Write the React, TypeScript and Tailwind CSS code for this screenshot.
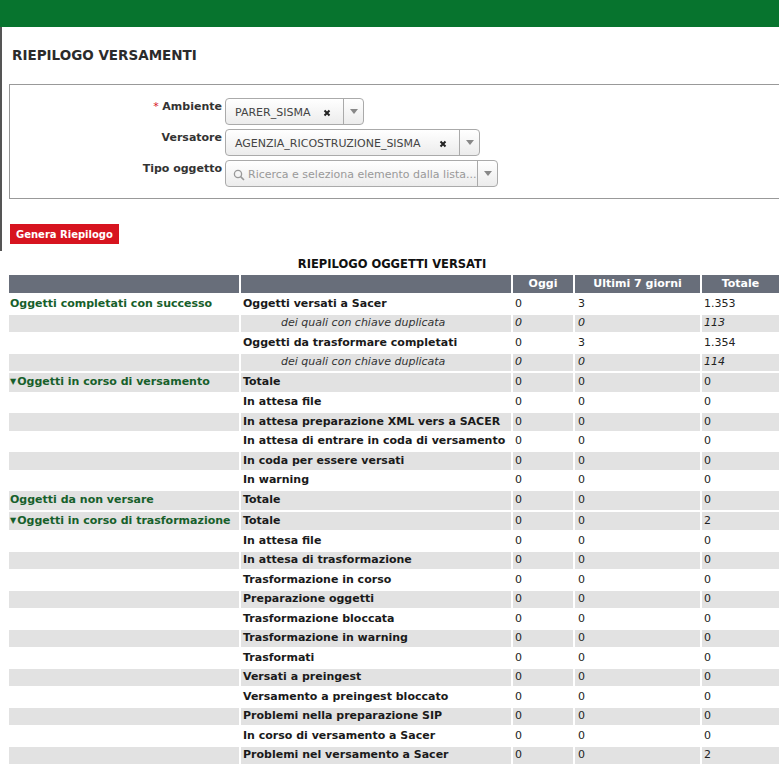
import React from 'react';

type Row = {
  group?: string;
  caret?: boolean;
  label: string;
  sub?: boolean;
  oggi: string;
  sette: string;
  totale: string;
  gray?: boolean;
  tall?: boolean;
};

const rows: Row[] = [
  { group: 'Oggetti completati con successo', label: 'Oggetti versati a Sacer', oggi: '0', sette: '3', totale: '1.353' },
  { label: 'dei quali con chiave duplicata', sub: true, oggi: '0', sette: '0', totale: '113', gray: true },
  { label: 'Oggetti da trasformare completati', oggi: '0', sette: '3', totale: '1.354' },
  { label: 'dei quali con chiave duplicata', sub: true, oggi: '0', sette: '0', totale: '114', gray: true },
  { group: 'Oggetti in corso di versamento', caret: true, label: 'Totale', oggi: '0', sette: '0', totale: '0', gray: true, tall: true },
  { label: 'In attesa file', oggi: '0', sette: '0', totale: '0' },
  { label: 'In attesa preparazione XML vers a SACER', oggi: '0', sette: '0', totale: '0', gray: true },
  { label: 'In attesa di entrare in coda di versamento', oggi: '0', sette: '0', totale: '0' },
  { label: 'In coda per essere versati', oggi: '0', sette: '0', totale: '0', gray: true },
  { label: 'In warning', oggi: '0', sette: '0', totale: '0' },
  { group: 'Oggetti da non versare', label: 'Totale', oggi: '0', sette: '0', totale: '0', gray: true, tall: true },
  { group: 'Oggetti in corso di trasformazione', caret: true, label: 'Totale', oggi: '0', sette: '0', totale: '2', gray: true, tall: true },
  { label: 'In attesa file', oggi: '0', sette: '0', totale: '0' },
  { label: 'In attesa di trasformazione', oggi: '0', sette: '0', totale: '0', gray: true },
  { label: 'Trasformazione in corso', oggi: '0', sette: '0', totale: '0' },
  { label: 'Preparazione oggetti', oggi: '0', sette: '0', totale: '0', gray: true },
  { label: 'Trasformazione bloccata', oggi: '0', sette: '0', totale: '0' },
  { label: 'Trasformazione in warning', oggi: '0', sette: '0', totale: '0', gray: true },
  { label: 'Trasformati', oggi: '0', sette: '0', totale: '0' },
  { label: 'Versati a preingest', oggi: '0', sette: '0', totale: '0', gray: true },
  { label: 'Versamento a preingest bloccato', oggi: '0', sette: '0', totale: '0' },
  { label: 'Problemi nella preparazione SIP', oggi: '0', sette: '0', totale: '0', gray: true },
  { label: 'In corso di versamento a Sacer', oggi: '0', sette: '0', totale: '0' },
  { label: 'Problemi nel versamento a Sacer', oggi: '0', sette: '0', totale: '2', gray: true },
];

const Arrow = () => (
  <div className="flex w-[20px] items-center justify-center self-stretch border-l border-[#aaa]">
    <div className="h-0 w-0 border-x-[4px] border-t-[5px] border-x-transparent border-t-[#888]" />
  </div>
);

const ClearX = () => (
  <svg width="8" height="8" viewBox="0 0 8 8" className="ml-auto mr-[12px] mt-[2px]">
    <path d="M1.5 1.5 L6.5 6.5 M6.5 1.5 L1.5 6.5" stroke="#222" strokeWidth="2" />
  </svg>
);

const SelectBox = ({ value, width }: { value: string; width: string }) => (
  <div
    className={`flex h-[27px] items-center rounded-[4px] border border-[#aaa] bg-linear-to-b from-white to-[#ececec] text-[11px] text-[#444] ${width}`}
  >
    <span className="pl-[9px] pt-[3px]">{value}</span>
    <ClearX />
    <Arrow />
  </div>
);

const App = () => {
  return (
    <div className="min-h-screen w-[779px] overflow-hidden bg-white font-['DejaVu_Sans',Verdana,sans-serif] text-[#222]">
      <div className="h-[27px] bg-[#07742e]" />

      <div className="border-l-2 border-[#555] pt-[18px] pb-[6px]">
        <h1 className="pl-[10px] text-[13.5px] font-bold text-[#2b2b2b]">RIEPILOGO VERSAMENTI</h1>

        <div className="mt-[19px] ml-[7px] w-[800px] border border-[#999] pt-[13px] pb-[11px]">
          <div className="flex flex-col gap-[4px]">
            <div className="flex items-start">
              <label className="w-[212px] pt-[1px] text-right text-[11px] font-bold text-[#333]">
                <span className="font-normal text-[#d7141f]">* </span>Ambiente
              </label>
              <div className="ml-[3px]">
                <SelectBox value="PARER_SISMA" width="w-[139px]" />
              </div>
            </div>
            <div className="flex items-start">
              <label className="w-[212px] pt-[1px] text-right text-[11px] font-bold text-[#333]">Versatore</label>
              <div className="ml-[3px]">
                <SelectBox value="AGENZIA_RICOSTRUZIONE_SISMA" width="w-[255px]" />
              </div>
            </div>
            <div className="flex items-start">
              <label className="w-[212px] pt-[1px] text-right text-[11px] font-bold text-[#333]">Tipo oggetto</label>
              <div className="ml-[3px]">
                <div className="flex h-[27px] w-[273px] items-center rounded-[4px] border border-[#aaa] bg-linear-to-b from-white to-[#ececec] text-[11px] text-[#999]">
                  <svg width="12" height="12" viewBox="0 0 12 12" className="ml-[7px] mr-[3px] mt-[2px]">
                    <circle cx="5" cy="5" r="3.6" fill="none" stroke="#999" strokeWidth="1.3" />
                    <path d="M7.6 7.6 L11 11" stroke="#999" strokeWidth="1.6" />
                  </svg>
                  <span className="flex-1 truncate pt-[3px]">Ricerca e seleziona elemento dalla lista...</span>
                  <Arrow />
                </div>
              </div>
            </div>
          </div>
        </div>

        <button className="mt-[25px] ml-[8px] h-[20px] bg-[#d7141f] px-[6px] text-[10px] font-bold text-white">
          Genera Riepilogo
        </button>
      </div>

      <div className="pl-[7px]">
        <table className="w-[774px] table-fixed border-separate border-spacing-[2px] text-[11px]">
          <caption className="pt-[5px] pr-[4px] text-center text-[11.5px] font-bold text-[#111]">
            RIEPILOGO OGGETTI VERSATI
          </caption>
          <colgroup>
            <col className="w-[230px]" />
            <col className="w-[270px]" />
            <col className="w-[60px]" />
            <col className="w-[125px]" />
            <col className="w-[77px]" />
          </colgroup>
          <thead>
            <tr className="h-[18px] bg-[#686e7a] text-white">
              <th />
              <th />
              <th className="p-0 text-center font-bold">Oggi</th>
              <th className="p-0 text-center font-bold">Ultimi 7 giorni</th>
              <th className="p-0 text-center font-bold">Totale</th>
            </tr>
          </thead>
          <tbody>
            {rows.map((r, i) => {
              const bg = r.gray ? 'bg-[#e2e2e2]' : 'bg-white';
              const h = r.tall ? 'h-[18.5px]' : 'h-[17.5px]';
              return (
                <tr key={i} className={`${bg} ${h}`}>
                  <td className="p-0 pl-[1px] font-bold whitespace-nowrap text-[#17602b]">
                    {r.caret && <span className="mr-[1px] inline-block align-middle text-[8px] leading-none">▼</span>}
                    {r.group}
                  </td>
                  <td
                    className={`p-0 whitespace-nowrap ${r.sub ? 'pl-[40px] italic text-[#333]' : 'pl-[2px] font-bold text-[#1a1a1a]'}`}
                  >
                    {r.label}
                  </td>
                  <td className={`p-0 pl-[2px] ${r.sub ? 'italic' : ''}`}>{r.oggi}</td>
                  <td className={`p-0 pl-[3px] ${r.sub ? 'italic' : ''}`}>{r.sette}</td>
                  <td className={`p-0 pl-[2px] ${r.sub ? 'italic' : ''}`}>{r.totale}</td>
                </tr>
              );
            })}
          </tbody>
        </table>
      </div>
    </div>
  );
};

export default App;
